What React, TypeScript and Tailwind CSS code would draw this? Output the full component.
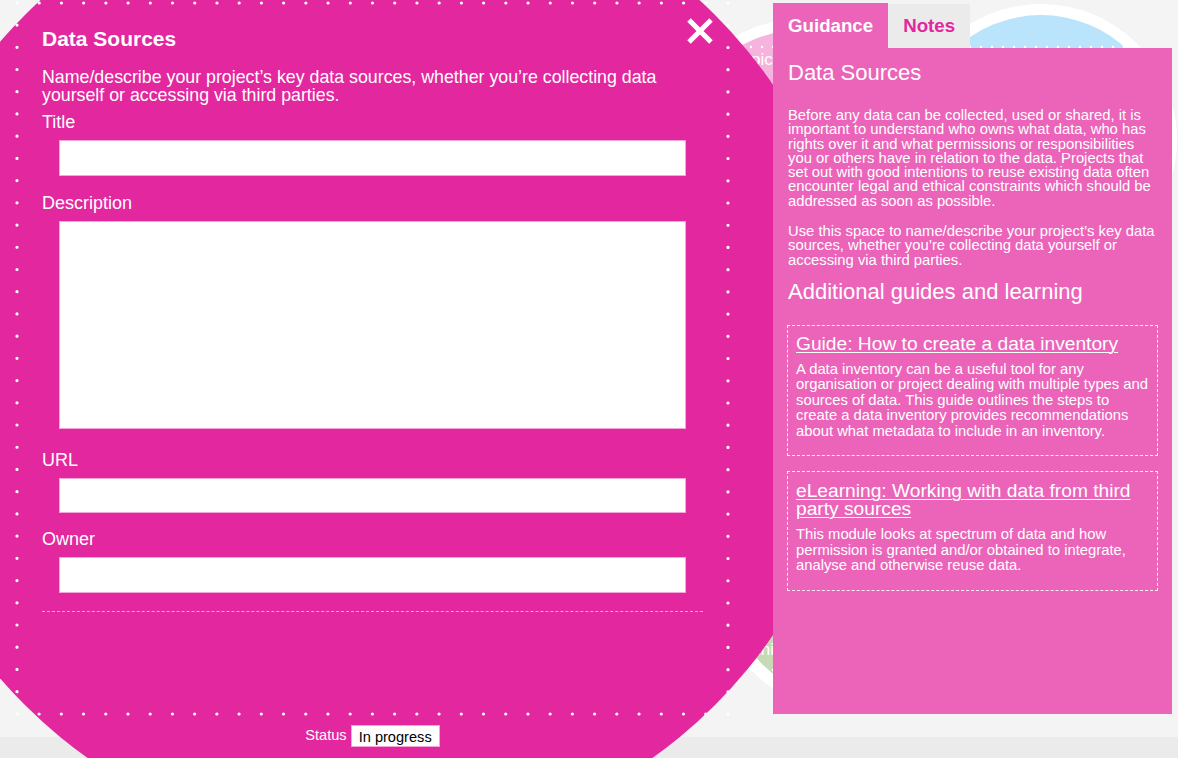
const font = "font-['Liberation_Sans',Arial,sans-serif]";

const DottedFrame = () => (
  <svg className="absolute -left-[2px] -top-[2px] pointer-events-none" width="715" height="715" viewBox="0 0 715 715">
    <rect
      x="2"
      y="2"
      width="711"
      height="711"
      fill="none"
      stroke="white"
      strokeWidth="3.2"
      strokeLinecap="round"
      strokeDasharray="0 22.22"
    />
  </svg>
);

const DotRow = ({ className, width }: { className: string; width: number }) => (
  <svg className={className} width={width} height="4" viewBox={`0 0 ${width} 4`}>
    <line x1="2" y1="2" x2={width - 2} y2="2" stroke="white" strokeWidth="2.4" strokeLinecap="round" strokeDasharray="0 11" />
  </svg>
);

const Field = ({ label, className, inputClass }: { label: string; className: string; inputClass: string }) => (
  <div className={className}>
    <div className="text-[18px] leading-[18px]">{label}</div>
    <div className={`mx-[17px] mt-[9px] bg-white border border-[#f3a6d8] ${inputClass}`} />
  </div>
);

const GuideCard = ({ title, body, className }: { title: string; body: string; className: string }) => (
  <div className={`border border-dashed border-white/90 px-[8px] pb-[16px] ${className}`}>
    <a href="#" className="block text-[19.2px] leading-[18px] underline underline-offset-[2px] decoration-1">
      {title}
    </a>
    <p className="mt-[9px] text-[14.8px] leading-[15.5px]">{body}</p>
  </div>
);

export default function App() {
  return (
    <div className={`relative w-[1178px] h-[758px] overflow-hidden bg-[#f4f4f4] flex flex-col ${font}`}>
      <div className="flex-1" />
      <div className="h-[21px] bg-[#ebebeb]" />

      {/* diagram circles behind the modal */}
      <div className="absolute left-[657px] top-[18px] w-[300px] h-[300px] rounded-full bg-white p-[11px]">
        <div className="w-full h-full rounded-full bg-[#f5b3dd]" />
      </div>
      <span className="absolute left-[733px] top-[50px] text-[17px] leading-[20px] text-white">Topic</span>
      <DotRow className="absolute left-[738px] top-[45px]" width={40} />

      <div className="absolute left-[905px] top-[4px] w-[272px] h-[272px] rounded-full bg-white p-[11px]">
        <div className="w-full h-full rounded-full bg-[#b9e4fb]" />
      </div>
      <DotRow className="absolute left-[968px] top-[45px]" width={160} />

      <div className="absolute left-[712px] top-[433px] w-[280px] h-[280px] rounded-full bg-white p-[12px]">
        <div className="w-full h-full rounded-full bg-[#c6dab6]" />
      </div>
      <span className="absolute left-[722px] top-[640px] text-[17px] leading-[20px] text-white">Admini</span>
      <DotRow className="absolute left-[738px] top-[668px]" width={40} />

      {/* modal */}
      <div className="absolute left-[-118px] top-[-128px] w-[976px] h-[976px] rounded-full bg-[#e2279f]" />
      <div className="absolute left-0 top-0 pl-[17px] pt-[3px] flex flex-col items-center text-white">
        <div className="relative w-[711px] h-[711px] px-[25px] pt-[24px]">
          <DottedFrame />
          <button className="absolute right-[15px] top-[15px]" aria-label="Close">
            <svg width="26" height="26" viewBox="0 0 26 26">
              <path d="M2 2 L24 24 M24 2 L2 24" stroke="white" strokeWidth="5" />
            </svg>
          </button>
          <h1 className="text-[21px] leading-[24px] font-bold">Data Sources</h1>
          <p className="mt-[17px] text-[17.8px] leading-[18px]">
            Name/describe your project’s key data sources, whether you’re collecting data yourself or accessing via third parties.
          </p>
          <Field label="Title" className="mt-[9px]" inputClass="h-[36px]" />
          <Field label="Description" className="mt-[18px]" inputClass="h-[208px]" />
          <Field label="URL" className="mt-[22px]" inputClass="h-[35px]" />
          <Field label="Owner" className="mt-[17px]" inputClass="h-[36px]" />
          <div className="mt-[18px] border-t border-dashed border-[#f4a3d7]" />
        </div>
        <div className="mt-[11px] flex items-center gap-[4px] text-[14.6px]">
          <span>Status</span>
          <span className="bg-white text-black px-[7px] h-[22px] leading-[22px] border border-[#f3a6d8]">In progress</span>
        </div>
      </div>

      {/* guidance sidebar */}
      <aside className="absolute left-[773px] top-[3px] w-[399px] flex flex-col text-white">
        <div className="flex items-end">
          <div className="h-[45px] px-[15px] bg-[#eb64ba] text-[18.7px] font-bold leading-[45px]">Guidance</div>
          <div className="h-[44px] px-[15px] bg-[#ebebeb] text-[#e2279f] text-[18.7px] font-bold leading-[44px]">Notes</div>
        </div>
        <div className="h-[666px] bg-[#eb64ba] px-[15px] pt-[13px]">
          <h2 className="text-[22px] leading-[24px]">Data Sources</h2>
          <p className="mt-[23px] text-[14.8px] leading-[14.3px]">
            Before any data can be collected, used or shared, it is important to understand who owns what data, who has rights over it and what permissions or responsibilities you or others have in relation to the data. Projects that set out with good intentions to reuse existing data often encounter legal and ethical constraints which should be addressed as soon as possible.
          </p>
          <p className="mt-[16px] text-[14.8px] leading-[14.3px]">
            Use this space to name/describe your project’s key data sources, whether you’re collecting data yourself or accessing via third parties.
          </p>
          <h2 className="mt-[13px] text-[22px] leading-[24px]">Additional guides and learning</h2>
          <GuideCard
            className="mt-[21px] -ml-[1px] mr-[-1px] pt-[9px]"
            title="Guide: How to create a data inventory"
            body="A data inventory can be a useful tool for any organisation or project dealing with multiple types and sources of data. This guide outlines the steps to create a data inventory provides recommendations about what metadata to include in an inventory."
          />
          <GuideCard
            className="mt-[15px] -ml-[1px] mr-[-1px] pt-[10px]"
            title="eLearning: Working with data from third party sources"
            body="This module looks at spectrum of data and how permission is granted and/or obtained to integrate, analyse and otherwise reuse data."
          />
        </div>
      </aside>
    </div>
  );
}
